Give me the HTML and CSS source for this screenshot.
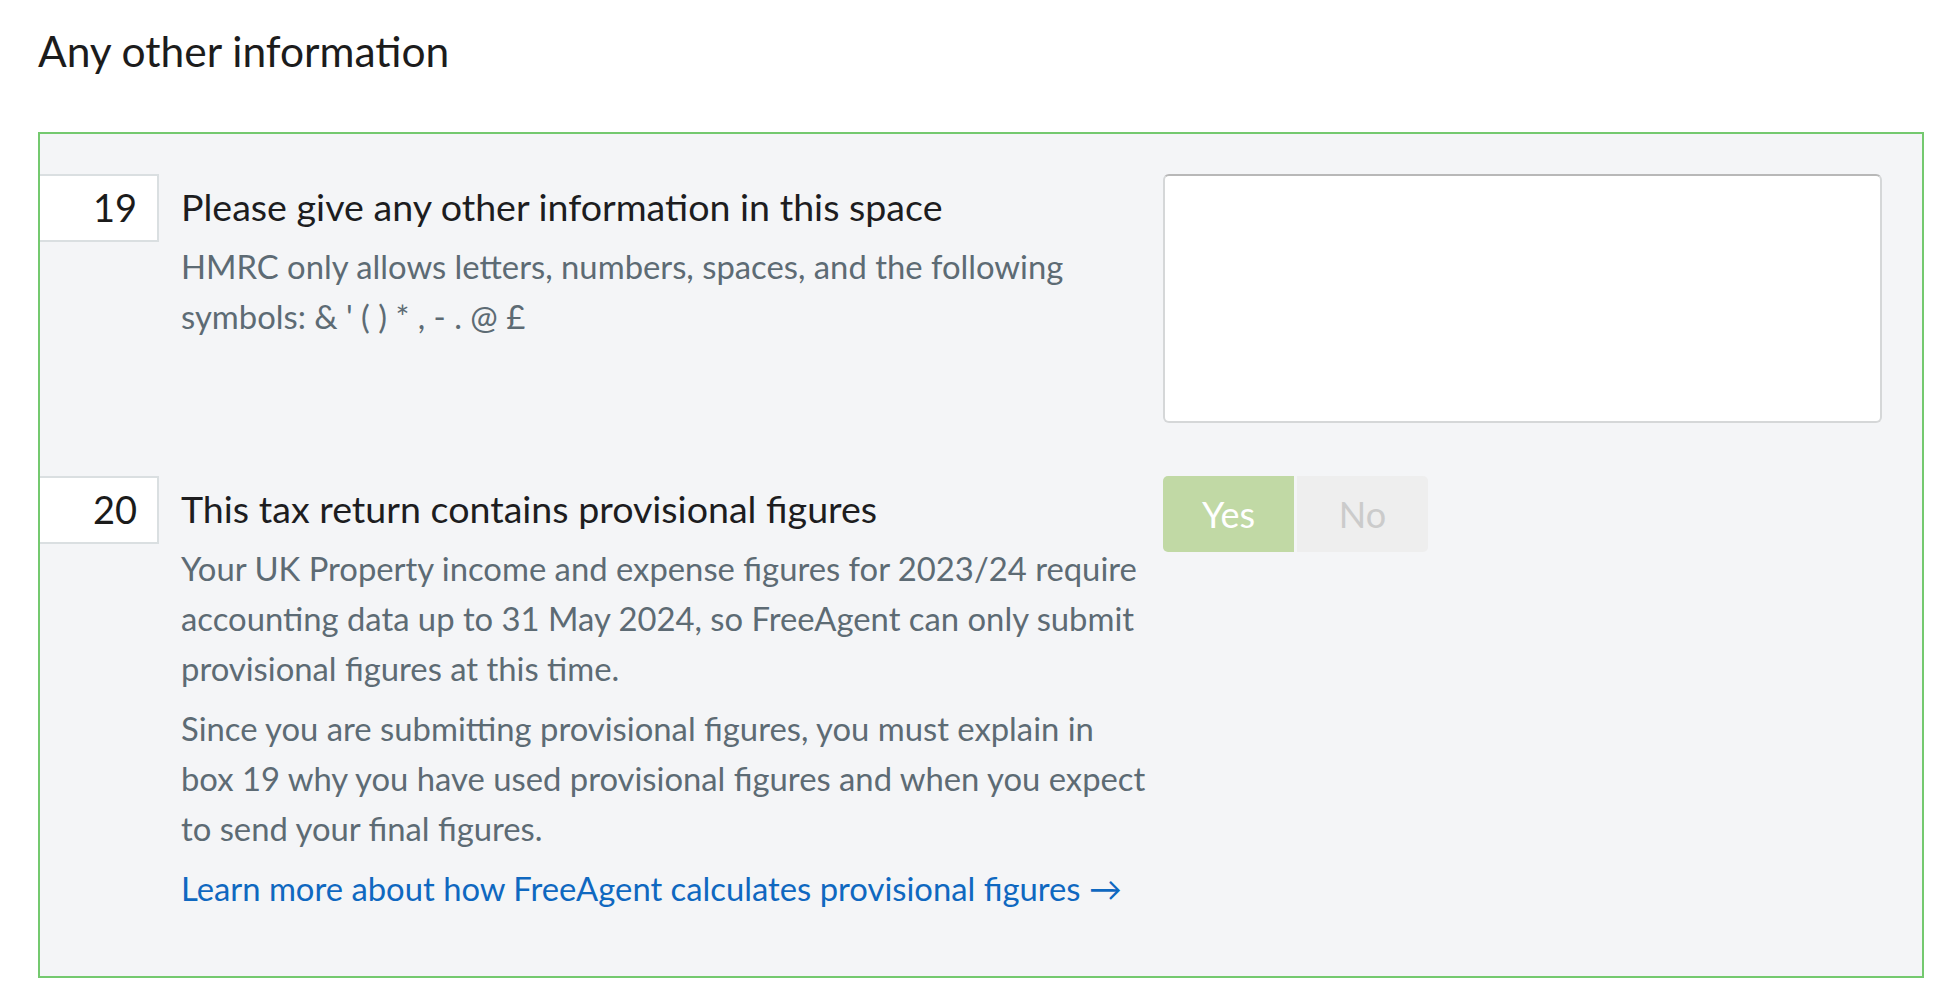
FILE: index.html
```html
<!DOCTYPE html>
<html lang="en">
<head>
    <meta charset="UTF-8">
    <meta name="viewport" content="width=device-width, initial-scale=1.0">
    <title>Any other information</title>
    <link rel="stylesheet" href="styles.css">
</head>
<body>
    <div class="page">
        <h2 class="section-title">Any other information</h2>

        <div class="panel">
            <!-- Box 19 -->
            <div class="row">
                <div class="box-number">19</div>
                <div class="row-text">
                    <h3 class="row-title">Please give any other information in this space</h3>
                    <p class="hint">HMRC only allows letters, numbers, spaces, and the following symbols: &amp; ' ( ) * , - . @ £</p>
                </div>
                <div class="row-field">
                    <textarea class="info-field"></textarea>
                </div>
            </div>

            <!-- Box 20 -->
            <div class="row">
                <div class="box-number">20</div>
                <div class="row-text">
                    <h3 class="row-title">This tax return contains provisional figures</h3>
                    <p class="hint">Your UK Property income and expense figures for 2023/24 require accounting data up to 31 May 2024, so FreeAgent can only submit provisional figures at this time.</p>
                    <p class="hint">Since you are submitting provisional figures, you must explain in box&nbsp;19 why you have used provisional figures and when you expect to send your final figures.</p>
                    <p class="hint"><a href="#" class="learn-link">Learn more about how FreeAgent calculates provisional figures →</a></p>
                </div>
                <div class="row-field">
                    <div class="toggle">
                        <button type="button" class="toggle-btn toggle-yes">Yes</button>
                        <button type="button" class="toggle-btn toggle-no">No</button>
                    </div>
                </div>
            </div>
        </div>
    </div>
</body>
</html>
```

FILE: styles.css
```css
/* Page */
body {
    margin: 0;
    padding: 0;
    background-color: #ffffff;
    font-family: Lato, "Noto Sans", Arial, sans-serif;
    color: #1d1d1f;
}

.page {
    padding: 0 24px 0 38px;
}

.section-title {
    margin: 0;
    padding: 25px 0 55px;
    font-size: 42.5px;
    font-weight: 400;
    line-height: 52px;
    color: #1c1c1c;
}

/* Green panel */
.panel {
    background-color: #f4f5f7;
    border: 2px solid #74c96f;
    padding: 40px 40px 52px 0;
}

.row {
    display: grid;
    grid-template-columns: 119px 1fr 719px;
    column-gap: 18px;
}

.row + .row {
    margin-top: 53px;
}

.box-number {
    height: 64px;
    box-sizing: content-box;
    background-color: #ffffff;
    border: 2px solid #dadfe1;
    border-left: none;
    padding-right: 20px;
    text-align: right;
    font-size: 38px;
    line-height: 62px;
    color: #1b1b1b;
}

/* text runs a little into the gap before the field column */
.row-text {
    padding-left: 4px;
    margin-right: -16px;
}

.row-title {
    margin: 8px 0 10px;
    font-size: 37.6px;
    font-weight: 400;
    line-height: 50px;
    color: #1d1d1f;
}

.hint {
    margin: 0 0 10px;
    font-size: 32.8px;
    line-height: 50px;
    color: #5d6b74;
}

.learn-link {
    color: #0f68c0;
    text-decoration: none;
}

/* Fields */
.info-field {
    display: block;
    width: 100%;
    height: 249px;
    box-sizing: border-box;
    background-color: #ffffff;
    border: 2px solid #d5d7d8;
    border-top-color: #b8b8b8;
    border-radius: 6px;
    resize: none;
}

.toggle {
    display: flex;
    gap: 3px;
}

.toggle-btn {
    width: 131px;
    height: 76px;
    border: none;
    font-family: inherit;
    font-size: 36px;
    cursor: pointer;
}

.toggle-yes {
    background-color: #c1d9a5;
    color: #ffffff;
    border-radius: 5px 0 0 5px;
}

.toggle-no {
    background-color: #eeeeee;
    color: #cbcbcb;
    border-radius: 0 5px 5px 0;
}
```
